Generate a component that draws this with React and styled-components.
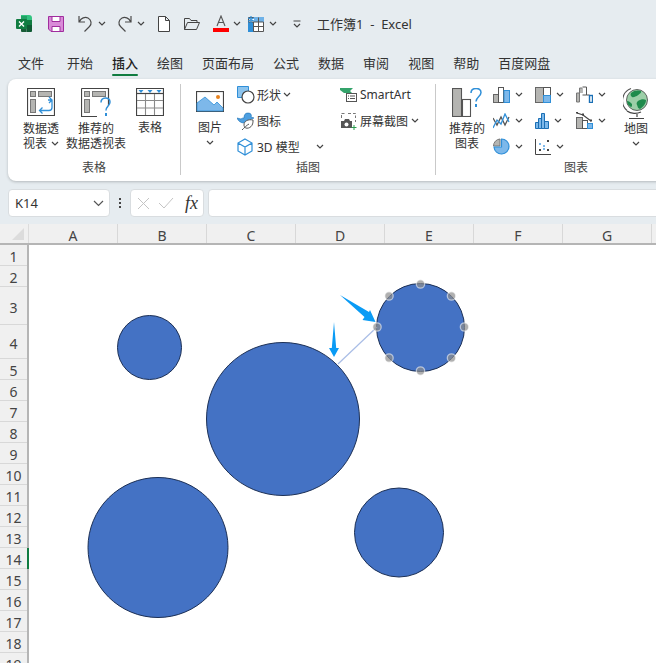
import styled, { createGlobalStyle } from "styled-components";

const FONT = `"Noto Sans", "Noto Sans CJK SC", sans-serif`;
const BLUE = "#2f8fd8";
const GRAY = "#444";
const MID = "#b5b5b2";

const Global = createGlobalStyle`
  html, body { margin: 0; padding: 0; background: #e6ecf0; }
  body { font-family: ${FONT}; color: #333; }
`;

const Page = styled.div`
  width: 656px;
  height: 663px;
  overflow: hidden;
  background: #e6ecf0;
`;

const TitleBar = styled.div`
  height: 47px;
  display: flex;
  align-items: center;
  padding-left: 16px;
`;

const Qat = styled.div`
  display: flex;
  align-items: center;
  margin-left: ${(p) => p.$left || 0}px;
  gap: ${(p) => p.$gap || 0}px;
`;

const Title = styled.div`
  margin-left: 16px;
  font-size: 13px;
  color: #333;
  white-space: pre;
`;

const Tabs = styled.div`
  height: 32px;
  display: flex;
  gap: 19px;
  padding-left: 18px;
`;

const Tab = styled.div`
  position: relative;
  font-size: 13px;
  line-height: 32px;
  white-space: nowrap;
  color: ${(p) => (p.$active ? "#1f1f1f" : "#333")};
  font-weight: ${(p) => (p.$active ? 500 : 400)};
  &:first-child {
    margin-right: 4px;
  }
  ${(p) =>
    p.$active &&
    `&::after {
      content: "";
      position: absolute;
      left: 0;
      right: 0;
      bottom: 3px;
      height: 2.5px;
      border-radius: 2px;
      background: #107c41;
    }`}
`;

const Ribbon = styled.div`
  margin-left: 8px;
  width: 720px;
  height: 102px;
  display: flex;
  align-items: flex-start;
  background: #fff;
  border-radius: 8px;
  box-shadow: 0 1px 3px rgba(0, 0, 0, 0.22);
`;

const Group = styled.div`
  width: ${(p) => p.$w}px;
  flex-shrink: 0;
  height: 91px;
  margin-top: 5px;
  display: flex;
  flex-direction: column;
  border-right: ${(p) => (p.$last ? "none" : "1px solid #c9c9c9")};
  box-sizing: border-box;
`;

const GroupBody = styled.div`
  height: 77px;
  flex-shrink: 0;
  display: flex;
  padding-left: ${(p) => p.$left || 0}px;
`;

const GroupLabel = styled.div`
  font-size: 12px;
  line-height: 14px;
  text-align: center;
  width: ${(p) => p.$w || "100%"};
  color: #444;
`;

const BigBtn = styled.div`
  width: ${(p) => p.$w}px;
  flex-shrink: 0;
  margin-left: ${(p) => p.$left || 0}px;
  display: flex;
  flex-direction: column;
  align-items: center;
  padding-top: ${(p) => p.$top ?? 4}px;
  box-sizing: border-box;
`;

const BigText = styled.div`
  margin-top: ${(p) => p.$top ?? 4}px;
  font-size: 12px;
  line-height: 15px;
  text-align: center;
  white-space: nowrap;
  color: #333;
`;

const BigLine = styled.div`
  display: flex;
  align-items: center;
  justify-content: center;
  gap: 4px;
`;

const ChevLine = styled.div`
  display: flex;
  justify-content: center;
  margin-top: 5px;
`;

const SmallCol = styled.div`
  width: ${(p) => p.$w}px;
  flex-shrink: 0;
  margin-left: ${(p) => p.$left || 0}px;
  display: flex;
  flex-direction: column;
  gap: 5px;
`;

const SmallRow = styled.div`
  height: 21px;
  display: flex;
  align-items: center;
  gap: ${(p) => p.$gap ?? 4}px;
  font-size: 12px;
  white-space: nowrap;
  color: #333;
`;

const ChevPush = styled.span`
  display: inline-flex;
  margin-left: ${(p) => p.$left || 0}px;
`;

const FormulaBar = styled.div`
  height: 28px;
  margin-top: 8px;
  padding: 0 0 0 8px;
  display: flex;
  align-items: stretch;
`;

const Field = styled.div`
  width: ${(p) => p.$w}px;
  flex-shrink: 0;
  margin-left: ${(p) => p.$left || 0}px;
  box-sizing: border-box;
  background: #fff;
  border: 1px solid #d9dde0;
  border-radius: 4px;
  display: flex;
  align-items: center;
  justify-content: space-between;
  padding: 0 5px 0 6px;
  font-size: 13px;
  color: #333;
`;

const Dots = styled.div`
  width: 20px;
  flex-shrink: 0;
  display: flex;
  flex-direction: column;
  align-items: center;
  justify-content: center;
  gap: 2px;
  i {
    width: 2px;
    height: 2px;
    background: #444;
  }
`;

const FxGroup = styled.div`
  display: flex;
  align-items: center;
  gap: 8px;
`;

const Fx = styled.span`
  font-family: "Liberation Serif", serif;
  font-style: italic;
  font-size: 18px;
  line-height: 18px;
  color: #333;
`;

const Sheet = styled.div`
  margin-top: 7px;
  background: #fff;
`;

const HeaderRow = styled.div`
  height: 19px;
  display: flex;
  background: #f0f0f0;
  border-bottom: 2px solid #b5b5b5;
  box-sizing: content-box;
`;

const Corner = styled.div`
  width: 29px;
  flex-shrink: 0;
  box-sizing: border-box;
  border-right: 1px solid #dcdcdc;
  display: flex;
  align-items: flex-end;
  justify-content: flex-end;
  padding: 0 4px 3px 0;
  &::after {
    content: "";
    border-style: solid;
    border-width: 0 0 12px 12px;
    border-color: transparent transparent #dcdcdc transparent;
  }
`;

const ColCell = styled.div`
  width: 89px;
  flex-shrink: 0;
  box-sizing: border-box;
  border-right: 1px solid #d8d8d8;
  text-align: center;
  font-size: 14px;
  line-height: 24px;
  color: #444;
`;

const Body = styled.div`
  display: flex;
  height: 420px;
`;

const RowHead = styled.div`
  width: 29px;
  flex-shrink: 0;
  box-sizing: border-box;
  background: #f0f0f0;
  border-right: 2px solid #b5b5b5;
`;

const RowCell = styled.div`
  position: relative;
  height: ${(p) => p.$h}px;
  box-sizing: border-box;
  border-bottom: 1px solid #d8d8d8;
  padding-top: ${(p) => (p.$h - 21) / 2 + 3}px;
  text-align: center;
  font-size: 14px;
  line-height: 18px;
  color: #444;
  ${(p) =>
    p.$sel &&
    `&::after {
      content: "";
      position: absolute;
      right: -2px;
      top: 0;
      bottom: -1px;
      width: 2px;
      background: #107c41;
    }`}
`;

const Canvas = styled.div`
  position: relative;
  flex: 1;
  background: #fff;
`;

const Shapes = styled.svg`
  position: absolute;
  left: 0;
  top: 0;
  overflow: visible;
`;

const Svg = styled.svg`
  display: block;
  flex-shrink: 0;
`;

const Icon = ({ w = 16, h = 16, children }) => (
  <Svg width={w} height={h} viewBox={`0 0 ${w} ${h}`} fill="none">
    {children}
  </Svg>
);

const Chevron = ({ color = "#444" }) => (
  <Svg width="8" height="5" viewBox="0 0 8 5" fill="none">
    <path d="M1 1l3 3 3-3" stroke={color} strokeWidth="1.2" />
  </Svg>
);

const BigChevron = () => (
  <Svg width="11" height="7" viewBox="0 0 11 7" fill="none">
    <path d="M1 1l4.500 4.500L10 1" stroke="#555" strokeWidth="1.200" />
  </Svg>
);

const ExcelIcon = () => (
  <Icon w={16} h={17}>
    <path d="M5 0h8a3 3 0 0 1 3 3v2H5z" fill="#33c481" />
    <path d="M5 1h6v4H5z" fill="#21a366" />
    <path d="M5 5h5.500v5H5z" fill="#21a366" />
    <path d="M10.500 5H16v5h-5.500z" fill="#107c41" />
    <path d="M5 10h5.500v7H6a1 1 0 0 1-1-1z" fill="#185c37" />
    <path d="M10.500 10H16v6a1 1 0 0 1-1 1h-4.500z" fill="#0f5a33" />
    <rect y="4" width="11" height="10" rx="1" fill="#107c41" />
    <path d="M3 6.500l5 5M8 6.500l-5 5" stroke="#fff" strokeWidth="1.400" />
  </Icon>
);

const SaveIcon = () => (
  <Icon w={16} h={16}>
    <path d="M.5.500h15v15H3L.5 13z" fill="#d98bd8" stroke="#a02d9e" />
    <path d="M4 .500h8v5H4zM4 10.500h8v5H4z" fill="#fff" stroke="#a02d9e" />
  </Icon>
);

const UndoIcon = ({ flip }) => (
  <Icon w={15} h={17}>
    <g transform={flip ? "translate(15 0) scale(-1 1)" : undefined}>
      <path
        d="M1 1v6h6M1.500 6.500C3 3 7 1.500 10 3c3.500 2 4 6 1.500 8.500L6.500 16.500"
        stroke="#4a4a4a"
        strokeWidth="1.200"
      />
    </g>
  </Icon>
);

const NewIcon = () => (
  <Icon w={12} h={16}>
    <path d="M.5.500h7l4 4v11h-11zM7.500.500v4h4" fill="#fff" stroke="#444" />
  </Icon>
);

const OpenIcon = () => (
  <Icon w={16} h={12}>
    <path d="M.5 11.500V.5h5l1.500 2h6v2M.5 11.500h12l3-7H3.500z" stroke="#444" />
  </Icon>
);

const FontColorIcon = () => (
  <Icon w={16} h={17}>
    <path d="M4 11L8 1l4 10M5.300 7.500h5.400" stroke="#555" strokeWidth="1.100" />
    <rect y="13" width="16" height="4" fill="#f00" />
  </Icon>
);

const FreezeIcon = () => (
  <Icon w={16} h={16}>
    <path d="M.5 1.500h15v14H.5z" fill="#fff" stroke="#555" />
    <path d="M6 1h10v5H6z" fill="#6fb2e8" />
    <path d="M0 6h5.500v10H0z" fill={BLUE} />
    <path d="M5.500 6v9.500M5.500 10.500h10M10.500 1.500v14M.5 6h15" stroke="#555" />
    <path d="M3 0v7M0 1.800l6 3.400M6 1.800L0 5.200" stroke={BLUE} strokeWidth="1.200" />
  </Icon>
);

const CustomizeIcon = () => (
  <Icon w={8} h={8}>
    <path d="M.5 1h7" stroke="#444" />
    <path d="M1 4l3 3 3-3" stroke="#444" strokeWidth="1.200" />
  </Icon>
);

const PivotIcon = ({ question }) => (
  <Icon w={question ? 31 : 28} h={29}>
    <path
      d={question ? "M.5.500h27v17M16 28.500H.5V.5" : "M.5.500h27v27H.5z"}
      stroke={GRAY}
      strokeWidth="1.200"
      fill="#fff"
    />
    <rect x="3.500" y="3.500" width="5" height="5" fill={MID} stroke="#777" />
    <rect x="11.500" y="3.500" width="13" height="5" fill={MID} stroke="#777" />
    <rect x="3.500" y="11.500" width="5" height="13" fill={MID} stroke="#777" />
    {question ? (
      <g stroke={BLUE} strokeWidth="1.500" fill="none">
        <path d="M20 14.500c0-6 9-6 9-.5 0 4-4 4-4 8.500" />
        <path d="M25 25v3" strokeWidth="2" />
      </g>
    ) : (
      <path
        d="M22 9l3 3-3 3M25 12v7.500c0 2-1 3-3 3h-9M15.500 19.500l-3 3 3 3M21 12h4"
        stroke={BLUE}
        strokeWidth="1.300"
        fill="none"
      />
    )}
  </Icon>
);

const TableIcon = () => (
  <Icon w={28} h={28}>
    <path d="M.5.500h27v27H.5z" fill="#fff" stroke={GRAY} strokeWidth="1.200" />
    <path d="M.5 5.500h27" stroke={GRAY} strokeWidth="1.200" />
    <path d="M9.500 6v21M18.500 6v21M1 12.500h26M1 20h26" stroke="#8a8a8a" strokeWidth="1.100" />
    <path d="M2.500 2h5l-2.500 3zM11.500 2h5L14 5zM20.500 2h5L23 5z" fill={BLUE} />
  </Icon>
);

const PictureIcon = () => (
  <Icon w={28} h={21}>
    <rect x=".5" y=".5" width="27" height="20" fill="#fff" stroke={GRAY} strokeWidth="1.200" />
    <path d="M1 20V12l8-6 9 8 3-3 6 6v3z" fill="#7db8ea" stroke={BLUE} strokeWidth=".8" />
    <circle cx="22" cy="6" r="2" fill="#e8821e" />
  </Icon>
);

const ShapesIcon = () => (
  <Icon w={18} h={18}>
    <path d="M.5.500h11v11H.5z" fill="#8cc4ee" stroke={BLUE} />
    <circle cx="11" cy="11" r="6" fill="#fff" stroke={GRAY} strokeWidth="1.200" />
  </Icon>
);

const IconsIcon = () => (
  <Icon w={18} h={18}>
    <path
      d="M0 6l4 1c1-1 2-1 3-1 0-3 1-5 4-5s4 2 3 4l3 1-3 1c-1 1-2 2-3 2L7 11c-3 0-6-2-7-5z"
      fill="#4d9fe0"
      stroke="#1a6fb5"
      strokeWidth=".6"
    />
    <path
      d="M16 8c-5-1-9 1-9 5 0 1 .5 2 1.500 3 4 1 8-2 7.500-8zM5 18c2-2 5-5 7-6"
      fill="#fff"
      stroke="#555"
    />
  </Icon>
);

const CubeIcon = () => (
  <Icon w={16} h={18}>
    <path d="M8 1l7 4v8l-7 4-7-4V5zM1 5l7 4 7-4M8 9v8" stroke={BLUE} strokeWidth="1.200" />
  </Icon>
);

const SmartArtIcon = () => (
  <Icon w={17} h={15}>
    <path d="M0 1h13l-3 3 2 2H4L0 3z" fill="#34a36b" />
    <rect x="6.500" y="6.500" width="10" height="8" fill="#fff" stroke="#555" />
    <path d="M8 9h1M10 9h5M8 11.500h1M10 11.500h5" stroke="#555" />
  </Icon>
);

const ScreenshotIcon = () => (
  <Icon w={17} h={18}>
    <path
      d="M1.500 6V1.500h4M8 1.500h3M13 1.500h2.500V6M15.500 8v2"
      stroke="#777"
      strokeDasharray="3 1.500"
    />
    <path d="M1 9h3l1-2h4l1 2h2v7H1z" fill="#555" />
    <circle cx="6.500" cy="12.500" r="2" fill="#fff" />
    <path d="M14 13v5M11.500 15.500h5" stroke="#2a9d4e" />
  </Icon>
);

const RecChartIcon = () => (
  <Icon w={31} h={29}>
    <rect x=".5" y=".5" width="9" height="28" fill={MID} stroke="#555" strokeWidth="1.100" />
    <rect x="10.500" y="11.500" width="8" height="17" fill="#fff" stroke="#555" strokeWidth="1.100" />
    <path d="M19 5c0-6 10-6 10-.5 0 4-5 4.500-5 9" stroke={BLUE} strokeWidth="1.500" />
    <path d="M24 16v3" stroke={BLUE} strokeWidth="2" />
  </Icon>
);

const BarIcon = () => (
  <Icon w={17} h={17}>
    <rect x=".5" y="8.500" width="5" height="8" fill={MID} stroke="#666" />
    <rect x="5.500" y="1.500" width="5" height="15" fill="#fff" stroke="#555" />
    <rect x="11" y="4.500" width="5.500" height="12" fill="#7db8ea" stroke={BLUE} />
  </Icon>
);

const LineIcon = () => (
  <Icon w={17} h={16}>
    <path d="M0 5l4 7 4-8 4 8 4-8" stroke="#555" strokeWidth="1.300" />
    <path d="M0 15l4-8 4 4 4-10 4 8" stroke={BLUE} strokeWidth="1.300" />
  </Icon>
);

const PieIcon = () => (
  <Icon w={17} h={17}>
    <path d="M7 1v7H.5A7 7 0 0 1 7 1z" fill={MID} stroke="#777" />
    <path d="M8.500 1A7.500 7.500 0 1 1 1 9h7.500z" fill="#7db8ea" stroke={BLUE} strokeWidth="1.200" />
  </Icon>
);

const TreemapIcon = () => (
  <Icon w={16} h={16}>
    <rect x=".5" y=".5" width="8" height="15" fill={MID} stroke="#666" />
    <rect x="8.500" y=".5" width="7" height="8" fill="#fff" stroke="#555" />
    <rect x="8.500" y="8.500" width="7" height="7" fill="#7db8ea" stroke={BLUE} />
  </Icon>
);

const StatIcon = () => (
  <Icon w={14} h={16}>
    <path
      d="M.5 9.500h3v6h-3zM3.500 5.500h3v10h-3zM6.500.5h3v15h-3zM9.500 8.500h4v7h-4z"
      fill="#7db8ea"
      stroke="#1a6fb5"
    />
  </Icon>
);

const ScatterIcon = () => (
  <Icon w={16} h={16}>
    <path d="M.5 0v15.500H16" stroke="#444" />
    <path d="M12 2h2M4 11h2M12 11h2" stroke="#444" strokeWidth="2" />
    <path d="M4 5h2M8 7h2M8 10h2" stroke="#7db8ea" strokeWidth="2" />
  </Icon>
);

const WaterfallIcon = () => (
  <Icon w={17} h={17}>
    <path d="M.5 16V7h3V16z" fill={MID} stroke="#777" />
    <path d="M3.500 7V2h3V7" fill={MID} stroke="#777" />
    <path d="M6.500 1h4v8h-4" fill="#fff" stroke="#555" />
    <path d="M10.500 9h3v7" stroke="#555" />
    <rect x="13.500" y="9.500" width="3" height="7" fill="#fff" stroke="#1a6fb5" strokeWidth="1.400" />
  </Icon>
);

const ComboIcon = () => (
  <Icon w={17} h={17}>
    <rect x=".5" y="5.500" width="6" height="11" fill={MID} stroke="#666" />
    <rect x="6.500" y="8.500" width="5" height="8" fill="#fff" stroke="#555" />
    <rect x="11.500" y="11.500" width="5" height="5" fill="#7db8ea" stroke={BLUE} />
    <path d="M1 1l6 2 8 6" stroke="#444" strokeWidth="1.200" />
    <path d="M0 .500h2M6 2.500h2M14 8.500h2" stroke="#444" strokeWidth="2" />
  </Icon>
);

const GlobeIcon = () => (
  <Icon w={26} h={33}>
    <circle cx="14" cy="13" r="10.500" fill="#9ccfa8" stroke="#444" strokeWidth=".8" />
    <path
      d="M8 6c3-3 8-3 10-2 1 2-2 3-4 5-2 0-3 2-5 1-1-1-2-2-1-4zM15 14c3-2 6-2 8-1 0 4-3 7-6 9-3-1-2-3-3-4-1-2 0-3 1-4zM4 14c2 0 3 1 5 3 0 2 0 3-1 3-2-1-4-3-4-6z"
      fill="#1f8b4c"
    />
    <path d="M8 1.500a13 13 0 0 0-4 22" stroke="#555" strokeWidth="1.100" />
    <path d="M4 24c4 3 10 3 14 1M14 26v4M6 31.500h15" stroke="#444" strokeWidth="1.200" />
  </Icon>
);

const tabs = ["文件", "开始", "插入", "绘图", "页面布局", "公式", "数据", "审阅", "视图", "帮助", "百度网盘"];
const cols = ["A", "B", "C", "D", "E", "F", "G"];
const rowHeights = [21, 21, 38, 34, 21, 21, 21, 21, 21, 21, 21, 21, 21, 21, 21, 21, 21, 21, 21];

const circles = [
  { cx: 120.5, cy: 102.5, r: 32 },
  { cx: 254, cy: 174, r: 76.5 },
  { cx: 129, cy: 302.5, r: 70 },
  { cx: 370, cy: 287.5, r: 44.5 },
  { cx: 391.5, cy: 82.5, r: 44 },
];

const handles = [
  [391.5, 39],
  [422.5, 51],
  [435.5, 82],
  [422.5, 113],
  [391.5, 126],
  [360, 113],
  [348, 82],
  [360, 51],
];

const chartCols = [
  { w: 42, items: [BarIcon, LineIcon, PieIcon] },
  { w: 41, items: [TreemapIcon, StatIcon, ScatterIcon] },
  { w: 43, items: [WaterfallIcon, ComboIcon] },
];

export default function App() {
  return (
    <Page>
      <Global />
      <TitleBar>
        <ExcelIcon />
        <Qat $left={16}>
          <SaveIcon />
        </Qat>
        <Qat $left={14} $gap={5}>
          <UndoIcon />
          <Chevron />
        </Qat>
        <Qat $left={11} $gap={5}>
          <UndoIcon flip />
          <Chevron />
        </Qat>
        <Qat $left={13}>
          <NewIcon />
        </Qat>
        <Qat $left={14}>
          <OpenIcon />
        </Qat>
        <Qat $left={13} $gap={4}>
          <FontColorIcon />
          <Chevron />
        </Qat>
        <Qat $left={7} $gap={5}>
          <FreezeIcon />
          <Chevron />
        </Qat>
        <Qat $left={16}>
          <CustomizeIcon />
        </Qat>
        <Title>工作簿1  -  Excel</Title>
      </TitleBar>

      <Tabs>
        {tabs.map((t) => (
          <Tab key={t} $active={t === "插入"}>
            {t}
          </Tab>
        ))}
      </Tabs>

      <Ribbon>
        <Group $w={173}>
          <GroupBody>
            <BigBtn $w={56} $left={5}>
              <PivotIcon />
              <BigText>
                数据透
                <BigLine>
                  视表
                  <Chevron />
                </BigLine>
              </BigText>
            </BigBtn>
            <BigBtn $w={54}>
              <PivotIcon question />
              <BigText>
                推荐的
                <br />
                数据透视表
              </BigText>
            </BigBtn>
            <BigBtn $w={44} $left={5}>
              <TableIcon />
              <BigText>表格</BigText>
            </BigBtn>
          </GroupBody>
          <GroupLabel>表格</GroupLabel>
        </Group>

        <Group $w={255}>
          <GroupBody>
            <BigBtn $w={58} $top={7}>
              <PictureIcon />
              <BigText $top={8}>图片</BigText>
              <ChevLine>
                <Chevron />
              </ChevLine>
            </BigBtn>
            <SmallCol $w={103} $left={-2}>
              <SmallRow $gap={2}>
                <ShapesIcon />
                形状
                <Chevron />
              </SmallRow>
              <SmallRow $gap={2}>
                <IconsIcon />
                图标
              </SmallRow>
              <SmallRow>
                <CubeIcon />
                <span>3D 模型</span>
                <ChevPush $left={12}>
                  <Chevron />
                </ChevPush>
              </SmallRow>
            </SmallCol>
            <SmallCol $w={90}>
              <SmallRow $gap={3}>
                <SmartArtIcon />
                SmartArt
              </SmallRow>
              <SmallRow $gap={3}>
                <ScreenshotIcon />
                屏幕截图
                <Chevron />
              </SmallRow>
            </SmallCol>
          </GroupBody>
          <GroupLabel>插图</GroupLabel>
        </Group>

        <Group $w={280} $last>
          <GroupBody $left={8}>
            <BigBtn $w={46}>
              <RecChartIcon />
              <BigText>
                推荐的
                <br />
                图表
              </BigText>
            </BigBtn>
            {chartCols.map((col, i) => (
              <SmallCol key={i} $w={col.w} $left={i === 0 ? 3 : 0}>
                {col.items.map((Chart, j) => (
                  <SmallRow key={j} $gap={5}>
                    <Chart />
                    <Chevron />
                  </SmallRow>
                ))}
              </SmallCol>
            ))}
            <BigBtn $w={34} $top={3}>
              <GlobeIcon />
              <BigText $top={1}>地图</BigText>
              <ChevLine>
                <Chevron />
              </ChevLine>
            </BigBtn>
          </GroupBody>
          <GroupLabel $w="280px">图表</GroupLabel>
        </Group>
      </Ribbon>

      <FormulaBar>
        <Field $w={102}>
          K14
          <BigChevron />
        </Field>
        <Dots>
          <i />
          <i />
          <i />
        </Dots>
        <Field $w={74}>
          <FxGroup>
            <Icon w={13} h={13}>
              <path d="M1 1l11 11M12 1L1 12" stroke="#c4c4c4" />
            </Icon>
            <Icon w={16} h={12}>
              <path d="M1 6l5 5 9-10" stroke="#c4c4c4" />
            </Icon>
          </FxGroup>
          <Fx>fx</Fx>
        </Field>
        <Field $w={460} $left={4} />
      </FormulaBar>

      <Sheet>
        <HeaderRow>
          <Corner />
          {cols.map((c) => (
            <ColCell key={c}>{c}</ColCell>
          ))}
        </HeaderRow>
        <Body>
          <RowHead>
            {rowHeights.map((h, i) => (
              <RowCell key={i} $h={h} $sel={i === 13}>
                {i + 1}
              </RowCell>
            ))}
          </RowHead>
          <Canvas>
            <Shapes width="627" height="420">
              {circles.map((c) => (
                <circle key={c.cx} {...c} fill="#4472c4" stroke="#1b2f55" strokeWidth="1" />
              ))}
              <path d="M309 119L348 82" stroke="#a9bde6" strokeWidth="1.200" />
              <path d="M311 50L340 67L341 65L346.500 77L333.500 75L335.500 72Z" fill="#0a9bf5" />
              <path d="M305 77L307.200 103L310 103L305 112L300 103L302.800 103Z" fill="#0a9bf5" />
              {handles.map(([x, y]) => (
                <circle
                  key={`${x}-${y}`}
                  cx={x}
                  cy={y}
                  r="4.200"
                  fill="#8f8f8f"
                  fillOpacity=".7"
                  stroke="#fff"
                  strokeOpacity=".55"
                  strokeWidth="1.300"
                />
              ))}
            </Shapes>
          </Canvas>
        </Body>
      </Sheet>
    </Page>
  );
}
